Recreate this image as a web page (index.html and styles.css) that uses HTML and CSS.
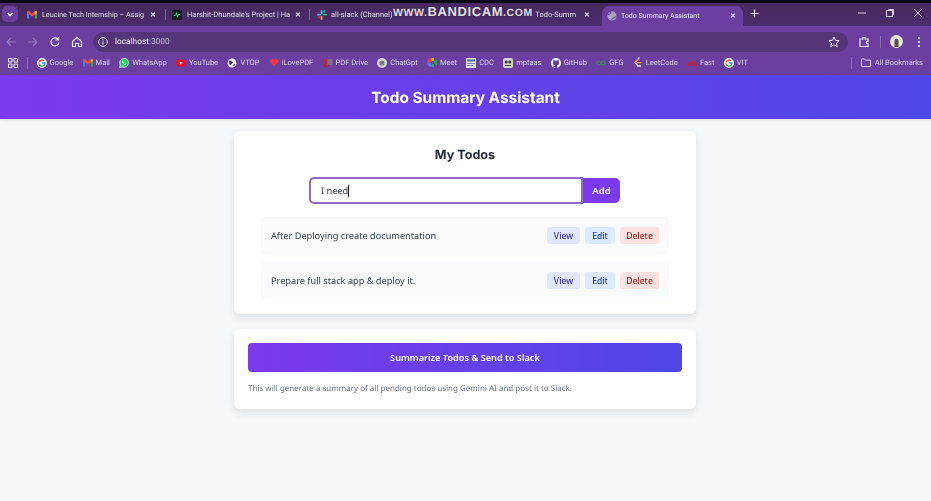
FILE: index.html
```html
<!DOCTYPE html>
<html lang="en">
  <head>
    <meta charset="UTF-8" />
    <meta name="viewport" content="width=device-width, initial-scale=1.0" />
    <title>Todo Summary Assistant</title>
    <link rel="stylesheet" href="styles.css">
  </head>
  <body>
    <svg class="defs" width="0" height="0">
      <symbol id="ic-google" viewBox="0 0 24 24">
        <circle cx="12" cy="12" r="12" fill="#fff"/>
        <path fill="#4285f4" d="M20.600 12.200c0-.6-.05-1.200-.16-1.800H12v3.400h4.800c-.2 1.100-.83 2-1.770 2.650v2.200h2.860c1.670-1.540 2.700-3.800 2.700-6.450z"/>
        <path fill="#34a853" d="M12 21c2.400 0 4.400-.8 5.890-2.150l-2.860-2.200c-.8.530-1.800.85-3.030.85-2.330 0-4.300-1.570-5-3.680H4v2.270A9 9 0 0 0 12 21z"/>
        <path fill="#fbbc05" d="M7 13.820a5.400 5.400 0 0 1 0-3.440V8.100H4a9 9 0 0 0 0 8z"/>
        <path fill="#ea4335" d="M12 6.580c1.320 0 2.500.45 3.430 1.340l2.540-2.540A9 9 0 0 0 4 8.100l3 2.280c.7-2.100 2.670-3.800 5-3.800z"/>
      </symbol>
      <symbol id="ic-gmail" viewBox="0 0 12 10">
        <path d="M0 1.500h2.500V10H1a1 1 0 0 1-1-1z" fill="#4b83e8"/>
        <path d="M9.500 1.500H12V9a1 1 0 0 1-1 1H9.500z" fill="#3aa757"/>
        <path d="M0 1.500l2-1 4 3.200 4-3.200 2 1v1.700L6 7.500 0 3.200z" fill="#e8503f"/>
        <path d="M9.500 1l2.500.5v1.700L9.500 5z" fill="#f5bb2b"/>
      </symbol>
      <symbol id="ic-globe" viewBox="0 0 11 11">
        <circle cx="5.500" cy="5.500" r="5" fill="#ada0c6"/>
        <path d="M1 4c2 0 3-1.500 3.500-3M5 10c0-2 3-2 5-4" fill="none" stroke="#6b4a9c" stroke-width="1.200"/>
      </symbol>
    </svg>

    <div class="browser">
      <div class="tabbar">
        <div class="tab-search"><svg width="10" height="10" viewBox="0 0 10 10"><path d="M2.500 4l2.500 2.500L7.500 4" fill="none" stroke="#fff" stroke-width="1.300"/></svg></div>
        <div class="tab tab-1">
          <svg class="fav" width="10" height="9"><use href="#ic-gmail"/></svg>
          <span class="tab-title">Leucine Tech Internship – Assig</span><span class="tab-x">✕</span>
        </div>
        <div class="tab-sep"></div>
        <div class="tab tab-2">
          <svg class="fav" width="10" height="10" viewBox="0 0 11 11"><rect width="11" height="11" rx="1" fill="#10201c"/><path d="M2 6h2l1-3 1 5 1-3h2" fill="none" stroke="#3ddc97" stroke-width="1"/></svg>
          <span class="tab-title">Harshit-Dhundale's Project | Ha</span><span class="tab-x">✕</span>
        </div>
        <div class="tab-sep"></div>
        <div class="tab tab-3">
          <svg class="fav" width="10" height="10" viewBox="0 0 11 11"><rect x="0" y="4" width="4.500" height="2" rx="1" fill="#36c5f0"/><rect x="4" y="0" width="2" height="4.500" rx="1" fill="#36c5f0"/><rect x="6.500" y="4" width="4.500" height="2" rx="1" fill="#2eb67d"/><rect x="4" y="6.500" width="2" height="4.500" rx="1" fill="#ecb22e"/><rect x="7" y="0" width="2" height="3" rx="1" fill="#2eb67d"/><rect x="1" y="7" width="3" height="2" rx="1" fill="#e01e5a"/></svg>
          <span class="tab-title">all-slack (Channel)</span>
          <span class="tab-end">Todo-Summ</span><span class="tab-x">✕</span>
        </div>
        <div class="tab tab-active">
          <svg class="fav" width="10" height="10"><use href="#ic-globe"/></svg>
          <span class="tab-title">Todo Summary Assistant</span><span class="tab-x">✕</span>
        </div>
        <div class="tab-new"><svg width="9" height="9" viewBox="0 0 9 9"><path d="M4.500 .5v8M.5 4.500h8" stroke="#f0ebf6" stroke-width="1.200"/></svg></div>
        <div class="win-controls">
          <svg width="10" height="10" viewBox="0 0 10 10"><path d="M1 5h8" stroke="#d8cfe6"/></svg>
          <svg width="10" height="10" viewBox="0 0 10 10"><rect x="1.500" y="2.500" width="6" height="6" fill="none" stroke="#d8cfe6"/><path d="M3.500 2.500v-1h5v5h-1" fill="none" stroke="#d8cfe6"/></svg>
          <svg width="10" height="10" viewBox="0 0 10 10"><path d="M1 1l8 8M9 1l-8 8" stroke="#d8cfe6"/></svg>
        </div>
      </div>

      <div class="toolbar">
        <svg class="nav nav-off" width="12" height="12" viewBox="0 0 12 12"><path d="M11 6H2M6 2L2 6l4 4" fill="none" stroke="currentColor" stroke-width="1.100"/></svg>
        <svg class="nav nav-off" width="12" height="12" viewBox="0 0 12 12"><path d="M1 6h9M6 2l4 4-4 4" fill="none" stroke="currentColor" stroke-width="1.100"/></svg>
        <svg class="nav" width="12" height="12" viewBox="0 0 12 12"><path d="M10 6.500A4 4 0 1 1 8.800 3M9.500 1v3h-3" fill="none" stroke="currentColor" stroke-width="1.200"/></svg>
        <svg class="nav" width="12" height="12" viewBox="0 0 12 12"><path d="M1.500 5.500L6 1.500l4.500 4v5h-3v-3h-3v3h-3z" fill="none" stroke="currentColor" stroke-width="1.100"/></svg>
        <div class="omnibox">
          <span class="omni-info"><svg width="10" height="10" viewBox="0 0 10 10"><circle cx="5" cy="5" r="4.300" fill="none" stroke="#eee8f5"/><path d="M5 4.500v3M5 2.500v1" stroke="#eee8f5"/></svg></span>
          <span class="omni-url">localhost<span class="omni-port">:3000</span></span>
          <svg class="omni-star" width="12" height="12" viewBox="0 0 12 12"><path d="M6 1l1.500 3.300 3.600.4-2.700 2.400.8 3.600L6 8.800l-3.200 1.900.8-3.600L.9 4.700l3.600-.4z" fill="none" stroke="#eee8f5"/></svg>
        </div>
        <svg class="nav ext" width="12" height="12" viewBox="0 0 12 12"><path d="M2 3h3V1.500h2V3h3v2.500H8.500v2H10V10.500H2z" fill="none" stroke="currentColor" stroke-width="1.200"/></svg>
        <div class="bar-sep"></div>
        <svg class="avatar" width="13" height="13" viewBox="0 0 13 13"><circle cx="6.500" cy="6.500" r="6.500" fill="#e9e4d8"/><path d="M4.500 12V6c0-3 4-3 4 0v6z" fill="#5c5040"/></svg>
        <svg class="kebab" width="4" height="12" viewBox="0 0 4 12"><circle cx="2" cy="2" r="1.100" fill="#eee"/><circle cx="2" cy="6" r="1.100" fill="#eee"/><circle cx="2" cy="10" r="1.100" fill="#eee"/></svg>
      </div>

      <div class="bookmarks">
        <svg class="apps" width="10" height="10" viewBox="0 0 10 10"><path d="M.5.500h3.500v3.500H.5zM6 .5h3.500v3.500H6zM.5 6h3.500v3.500H.5zM6 6h3.500v3.500H6z" fill="none" stroke="#eee" stroke-width="1"/></svg>
        <div class="bar-sep"></div>
        <span class="bm"><svg width="10" height="10"><use href="#ic-google"/></svg>Google</span>
        <span class="bm"><svg width="10" height="9"><use href="#ic-gmail"/></svg>Mail</span>
        <span class="bm"><svg width="10" height="10" viewBox="0 0 10 10"><path d="M.5 9.500l.7-2.500A4.500 4.500 0 1 1 3 8.800z" fill="#25d366" stroke="#fff" stroke-width=".7"/><path d="M3.500 3c-.5 1 .2 2 1 2.800s1.800 1.300 2.500.8l-.8-1-.7.300-1.100-1.100.3-.7z" fill="#fff"/></svg>WhatsApp</span>
        <span class="bm"><svg width="10" height="8" viewBox="0 0 10 8"><rect width="10" height="7" y=".5" rx="1.800" fill="#e5122b"/><path d="M4 2.500l2.500 1.500L4 5.500z" fill="#fff"/></svg>YouTube</span>
        <span class="bm"><svg width="10" height="10" viewBox="0 0 10 10"><circle cx="5" cy="5" r="4.500" fill="#ece9f2"/><path d="M2 2.500c1.500 0 2 1 3 1s1 1.500 0 2-1 2-2 1.500-1-3-1-4.500zM6.500 6c1 0 1.500.5 1.500 1l-1.500 1.300z" fill="#3a2f58"/></svg>VTOP</span>
        <span class="bm"><svg width="10" height="9" viewBox="0 0 10 9"><path d="M5 8.500L1 4.500A2.300 2.300 0 0 1 5 2a2.300 2.300 0 0 1 4 2.500z" fill="#e5384f"/></svg>iLovePDF</span>
        <span class="bm"><svg width="10" height="10" viewBox="0 0 10 10"><rect y="1" width="5" height="8" fill="#b02a3a"/><rect x="4.500" y="1" width="5" height="6" fill="#7d6a92"/></svg>PDF Drive</span>
        <span class="bm"><svg width="10" height="10" viewBox="0 0 10 10"><circle cx="5" cy="5" r="5" fill="#d8d6dc"/><circle cx="5" cy="5" r="2.600" fill="#7b7a80"/></svg>ChatGpt</span>
        <span class="bm"><svg width="10" height="9" viewBox="0 0 10 9"><path d="M0 4.500A4.500 4.500 0 0 1 4.500 0V3L3 4.500z" fill="#ea4335"/><path d="M4.500 0H7v3H4.500z" fill="#fbbc05"/><path d="M0 4.500h3L4.500 6v3A4.500 4.500 0 0 1 0 4.500z" fill="#4285f4"/><path d="M4.500 6H7v3H4.500z" fill="#34a853"/><path d="M7 3l3-1.500v6L7 6z" fill="#2f9e50"/></svg>Meet</span>
        <span class="bm"><svg width="10" height="10" viewBox="0 0 10 10"><rect width="10" height="10" fill="#dfe4ee"/><rect x="1" y="1.500" width="8" height="2" fill="#3f6ea8"/><rect x="1" y="5" width="8" height="1" fill="#7b86a0"/><rect x="1" y="7" width="6" height="1" fill="#7b86a0"/></svg>CDC</span>
        <span class="bm"><svg width="10" height="10" viewBox="0 0 10 10"><rect width="10" height="10" rx="2" fill="#d5d3ca"/><circle cx="3.200" cy="4" r="1.500" fill="#3c3a34"/><circle cx="6.800" cy="4" r="1.500" fill="#3c3a34"/><path d="M2 7.500h6" stroke="#3c3a34"/></svg>mptaas</span>
        <span class="bm"><svg width="10" height="10" viewBox="0 0 16 16"><path fill="#fff" d="M8 0C3.580 0 0 3.580 0 8c0 3.540 2.290 6.530 5.470 7.590.4.070.55-.17.55-.38 0-.19-.01-.82-.01-1.490-2.010.37-2.530-.49-2.690-.94-.09-.23-.48-.94-.82-1.130-.28-.15-.68-.52-.01-.53.63-.01 1.080.58 1.230.82.720 1.210 1.870.87 2.330.66.070-.52.280-.87.510-1.070-1.780-.2-3.640-.89-3.640-3.950 0-.87.310-1.590.820-2.150-.08-.2-.36-1.020.08-2.120 0 0 .67-.21 2.200.82.640-.18 1.320-.27 2-.27s1.360.09 2 .27c1.530-1.040 2.200-.82 2.200-.82.440 1.100.160 1.920.080 2.120.510.560.820 1.270.820 2.150 0 3.070-1.870 3.750-3.650 3.950.290.25.540.730.540 1.480 0 1.070-.01 1.930-.01 2.200 0 .21.150.46.550.38A8.013 8.013 0 0 0 16 8c0-4.420-3.580-8-8-8z"/></svg>GitHub</span>
        <span class="bm"><svg width="10" height="6" viewBox="0 0 10 6"><circle cx="2.700" cy="3" r="2" fill="none" stroke="#3d8a55" stroke-width="1.200"/><circle cx="7.300" cy="3" r="2" fill="none" stroke="#3d8a55" stroke-width="1.200"/></svg>GFG</span>
        <span class="bm"><svg width="10" height="11" viewBox="0 0 10 11"><path d="M6.500.5L2 5.500l3 3.500h3" fill="none" stroke="#e8e4ee" stroke-width="1.300"/><path d="M3.500 5.700h5" stroke="#e8a13a" stroke-width="1.200"/><path d="M2 5.500l3-3" stroke="#e0832a" stroke-width="1.300"/></svg>LeetCode</span>
        <span class="bm"><svg width="10" height="6" viewBox="0 0 10 6"><path d="M0 6a5 5 0 0 1 10 0H7.500L5 2.500 4 6z" fill="#c4213a"/></svg>Fast</span>
        <span class="bm"><svg width="10" height="10"><use href="#ic-google"/></svg>VIT</span>
        <div class="bar-sep bm-end"></div>
        <span class="bm bm-all"><svg width="10" height="9" viewBox="0 0 10 9"><path d="M.5 1h3.200l1 1.200h4.800v6.300H.5z" fill="none" stroke="#e6dff0" stroke-width=".9"/></svg>All Bookmarks</span>
      </div>
      <div class="watermark"><span class="wm-small">WWW.</span>BANDICAM<span class="wm-small">.COM</span></div>
    </div>

    <header class="app-header">
      <h1>Todo Summary Assistant</h1>
    </header>

    <main class="app-main">
      <section class="card todos">
        <h2>My Todos</h2>
        <form class="add-form">
          <div class="todo-input">I need<span class="caret"></span></div>
          <button type="button" class="add-btn">Add</button>
        </form>
        <ul class="todo-list">
          <li class="todo-item">
            <span>After Deploying create documentation</span>
            <div class="actions">
              <button type="button" class="btn btn-view">View</button>
              <button type="button" class="btn btn-edit">Edit</button>
              <button type="button" class="btn btn-delete">Delete</button>
            </div>
          </li>
          <li class="todo-item">
            <span>Prepare full stack app &amp; deploy it.</span>
            <div class="actions">
              <button type="button" class="btn btn-view">View</button>
              <button type="button" class="btn btn-edit">Edit</button>
              <button type="button" class="btn btn-delete">Delete</button>
            </div>
          </li>
        </ul>
      </section>

      <section class="card summary">
        <button type="button" class="summary-btn">Summarize Todos &amp; Send to Slack</button>
        <p>This will generate a summary of all pending todos using Gemini AI and post it to Slack.</p>
      </section>
    </main>
  </body>
</html>
```

FILE: styles.css
```css
* {
  box-sizing: border-box;
}
html, body {
  height: 100%;
}
body {
  margin: 0;
  overflow: hidden;
  background-color: #f4f8fa;
  font-family: "Noto Sans", sans-serif;
  text-rendering: geometricPrecision;
  display: flex;
  flex-direction: column;
}
.defs {
  position: absolute;
}

/* browser chrome */
.browser {
  position: relative;
  flex: none;
  font-family: Roboto, sans-serif;
  font-size: 7.500px;
  color: #e2daed;
  background: #6b3fa0;
}
.tabbar, .toolbar, .bookmarks {
  filter: blur(.3px);
}
.tabbar {
  height: 26px;
  display: flex;
  align-items: center;
  padding-top: 3px;
  background: linear-gradient(#0b0a10 0, #0b0a10 3px, #47295f 3px, #4b2b6a 100%);
}
.tab-search {
  width: 16px;
  height: 16px;
  margin: 0 9px 2px 2px;
  border-radius: 5px;
  background: #6b3fa0;
  display: flex;
  align-items: center;
  justify-content: center;
}
.tab {
  display: flex;
  align-items: center;
  height: 20px;
  margin-top: 3px;
  padding-bottom: 3px;
}
.tab-1 {
  width: 131px;
  margin-right: 7px;
  font-size: 7.200px;
}
.tab-2 {
  width: 131px;
  margin: 3px 6px 0;
}
.tab-3 {
  width: 275px;
  margin-left: 7px;
}
.tab-active {
  width: 141px;
  margin-left: 10px;
  padding: 0 5px;
  border-radius: 7px 7px 0 0;
  background: #6b3fa0;
  font-size: 7px;
}
.fav {
  flex: none;
  margin-right: 5px;
}
.tab-3 .fav, .tab-active .fav {
  margin-right: 4px;
}
.tab-title {
  flex: 1;
  white-space: nowrap;
}
.tab-end {
  margin-right: 6px;
}
.tab-active .tab-title {
  color: #f3eef9;
}
.tab-x {
  flex: none;
  width: 10px;
  font-size: 7px;
  font-weight: 700;
  text-align: center;
}
.tab-sep {
  flex: none;
  width: 1px;
  height: 11px;
  background: #7a5e96;
}
.tab-new {
  display: flex;
  margin: 0 0 3px 7px;
}
.win-controls {
  display: flex;
  gap: 18px;
  margin: 0 8px 3px auto;
}
.toolbar {
  height: 27px;
  display: flex;
  align-items: center;
  padding: 4px 0 0 5px;
  background: #6b3fa0;
}
.nav {
  flex: none;
  margin-right: 10px;
  color: #f0ebf6;
}
.nav-off {
  color: #9a7fc0;
}
.omnibox {
  flex: 1;
  height: 20px;
  display: flex;
  align-items: center;
  padding: 0 8px 0 5px;
  border-radius: 10px;
  background: #553578;
  font-size: 8.300px;
}
.omni-info {
  display: flex;
  margin-right: 7px;
}
.omni-url {
  color: #f5f0fa;
}
.omni-port {
  color: #c6b6da;
}
.omni-star {
  margin-left: auto;
}
.ext {
  margin: 0 0 0 10px;
}
.bar-sep {
  flex: none;
  width: 1px;
  height: 12px;
  margin: 0 9px 0 10px;
  background: #8d6cb5;
}
.avatar {
  flex: none;
  margin-right: 14px;
}
.kebab {
  flex: none;
  margin-right: 10px;
}
.bookmarks {
  height: 22px;
  display: flex;
  align-items: center;
  gap: 9.300px;
  padding: 0 8px 3px 8px;
  background: #6b3fa0;
  white-space: nowrap;
}
.bookmarks .apps {
  flex: none;
}
.bookmarks .bar-sep {
  margin: 0 -1px 0 0;
}
.bm {
  display: flex;
  align-items: center;
  gap: 3px;
  color: #dcd3e8;
}
.bookmarks .bm-end {
  margin-left: auto;
}
.bm-all {
  gap: 4px;
}
.watermark {
  position: absolute;
  left: 393px;
  top: 4px;
  font-family: "Liberation Sans", sans-serif;
  font-size: 13px;
  font-weight: 700;
  letter-spacing: .6px;
  color: #e4e0e8;
  text-shadow: 0 0 1px #2a1c3c;
}
.wm-small {
  font-size: 10.500px;
}

/* app */
.app-header {
  height: 44px;
  flex: none;
  display: flex;
  align-items: center;
  justify-content: center;
  background: linear-gradient(90deg, #7c3aed, #4f46e5);
  box-shadow: 0 1px 3px rgba(0, 0, 0, 0.12);
}
.app-header h1 {
  margin: 0;
  font-family: Inter, sans-serif;
  font-size: 15.400px;
  font-weight: 700;
  color: #fff;
  filter: blur(.25px);
}
.app-main {
  width: 463px;
  margin: 12px auto 0;
  padding-right: 1px;
  display: flex;
  flex-direction: column;
  gap: 15px;
  filter: blur(.25px);
}
.card {
  background: #fff;
  border-radius: 6px;
  box-shadow: 0 3px 9px rgba(0, 0, 0, 0.1);
}
.todos {
  height: 183px;
  padding: 16px 27px 0;
}
h2 {
  margin: 0;
  text-align: center;
  font-family: Inter, sans-serif;
  font-size: 12.600px;
  line-height: 17px;
  font-weight: 700;
  color: #1f2937;
}
.add-form {
  display: flex;
  margin: 13px 0 0 48px;
}
.todo-input {
  width: 274px;
  height: 27px;
  padding: 0 10px;
  display: flex;
  align-items: center;
  border: 2px solid #8f6cc4;
  border-radius: 5px 0 0 5px;
  font-size: 9.200px;
  color: #374151;
}
.caret {
  width: 1px;
  height: 12px;
  background: #111;
}
.add-btn {
  width: 37px;
  height: 25px;
  margin-top: 1px;
  border: 0;
  border-radius: 0 5px 5px 0;
  background: #7c3aed;
  color: #fff;
  font-family: inherit;
  font-size: 9.500px;
  font-weight: 600;
}
.todo-list {
  list-style: none;
  margin: 13px 0 0;
  padding: 0;
  display: flex;
  flex-direction: column;
  gap: 8px;
}
.todo-item {
  height: 37px;
  padding: 0 10px;
  display: flex;
  align-items: center;
  justify-content: space-between;
  background: #f8fafc;
  border-radius: 4px;
  font-size: 9.200px;
  color: #374151;
}
.actions {
  display: flex;
  gap: 5px;
}
.btn {
  height: 17px;
  border: 0;
  border-radius: 3px;
  font-family: inherit;
  font-size: 8.600px;
  font-weight: 500;
}
.btn-view {
  width: 33px;
  padding: 0;
  background: #e0e7ff;
  color: #3730a3;
}
.btn-edit {
  width: 30px;
  padding: 0;
  background: #dbeafe;
  color: #1e40af;
}
.btn-delete {
  width: 39px;
  padding: 0;
  background: #fee2e2;
  color: #991b1b;
}
.summary {
  height: 80px;
  padding: 14px 14px 0;
}
.summary-btn {
  width: 100%;
  height: 29px;
  border: 0;
  border-radius: 4px;
  background: linear-gradient(90deg, #7c3aed, #4f46e5);
  color: #fff;
  font-family: inherit;
  font-size: 9.200px;
  font-weight: 600;
}
.summary p {
  margin: 10px 0 0;
  font-size: 8px;
  line-height: 13px;
  color: #6b7280;
}
```
